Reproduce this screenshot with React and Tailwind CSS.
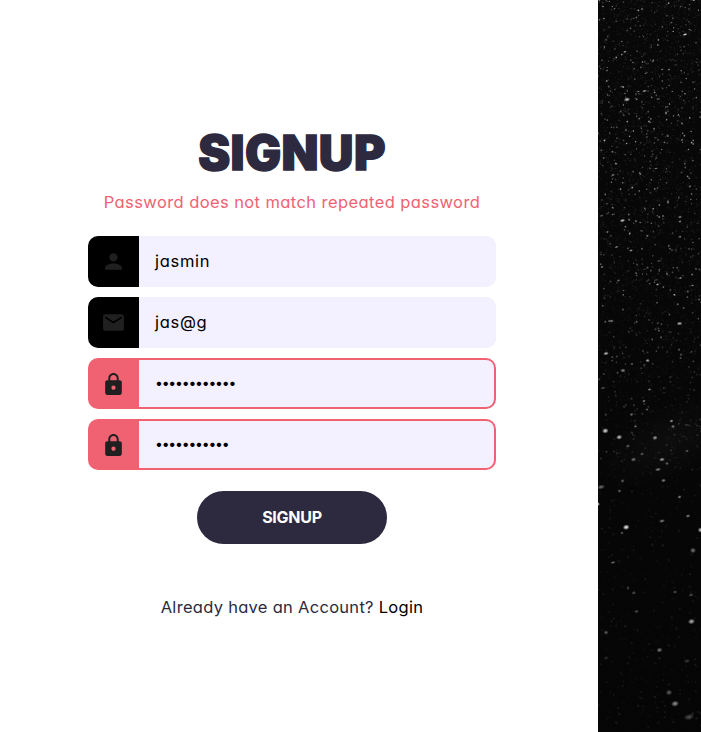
import { MdPerson, MdMail, MdLock } from "react-icons/md";

// [x, y, rx, ry, opacity] of the bright stars, in panel coordinates
const STARS = [
  [87, 34.5, 2, 1, 0.85], [29, 99.5, 2.4, 1.6, 0.8], [46.5, 91, 1.8, 1, 0.65], [40.5, 91.5, 1, 0.7, 0.6],
  [91.5, 29.5, 1, 0.8, 0.5], [44, 9, 1.2, 0.9, 0.5], [26.5, 52, 1, 0.8, 0.6], [35, 62.5, 1, 0.8, 0.5],
  [44.5, 62, 1, 0.8, 0.6], [9, 70.5, 1, 0.9, 0.5], [68, 113, 1.2, 1.4, 0.55], [24.5, 220.5, 2, 1.2, 0.85],
  [70, 202, 1.2, 1.6, 0.5], [82, 217, 1.6, 1.2, 0.5], [82, 221.5, 1.2, 1, 0.6], [15, 175, 1.5, 1, 0.5],
  [58, 168.5, 1.5, 0.8, 0.5], [84, 140, 1.3, 0.9, 0.5], [65, 216, 1, 0.8, 0.6], [9.5, 232, 1, 0.8, 0.6],
  [18.5, 247, 1.7, 0.8, 0.6], [33, 250.5, 1.5, 1, 0.6], [4, 267, 1.2, 0.9, 0.6], [59.5, 284.5, 1.2, 1, 0.75],
  [69, 274, 1, 1.4, 0.45], [82.5, 278, 1.2, 1, 0.6], [94.5, 285.5, 1.5, 0.8, 0.55], [76, 294.5, 1, 0.8, 0.5],
  [20.5, 280.5, 1.2, 1, 0.5], [25.5, 290.5, 1, 0.8, 0.4], [13.5, 321, 1.8, 1.2, 0.5], [81.5, 323.5, 2.1, 1.4, 0.7],
  [8, 353.5, 2.1, 1.3, 0.75], [49.5, 360.5, 1.6, 1.2, 0.7], [25, 370.5, 2, 1.5, 0.5], [34, 364, 1.3, 1, 0.4],
  [51.5, 389.5, 1.4, 1, 0.6], [46, 401, 1.4, 1.1, 0.5], [49, 409.5, 1.4, 1, 0.4], [33.5, 414.5, 1.5, 1.2, 0.45],
  [5, 388, 2, 0.9, 0.35], [37.5, 426.5, 1.3, 1, 0.5], [73.5, 421, 1.6, 1.2, 0.6], [75, 426.5, 1.6, 1.2, 0.5],
  [7.3, 430.8, 2.4, 2, 0.85], [21.2, 437.2, 2.3, 1.8, 0.75], [57, 437.8, 2, 1.6, 0.6], [35.5, 459.5, 2, 1.6, 0.45],
  [64, 459.5, 2.2, 1.5, 0.6], [69, 463.5, 1.4, 1.2, 0.4], [60, 469.5, 2.3, 1.3, 0.5], [65.5, 480.5, 1.8, 1.4, 0.5],
  [24.5, 481, 1.6, 1.4, 0.35], [3, 487, 3, 1.7, 0.4], [89, 451, 1.4, 1.2, 0.35], [44, 454, 1.5, 1.3, 0.35],
  [30, 446, 1.6, 1.3, 0.35], [81.5, 497, 1.6, 1.3, 0.5], [90, 516, 1.8, 1.3, 0.5], [64, 521, 2.2, 1.3, 0.5],
  [21.5, 491, 1.4, 1.3, 0.4], [0.5, 504, 1, 1.5, 0.7], [28.2, 527.2, 2.5, 2, 0.95], [24, 533, 1.4, 1.2, 0.35],
  [102.5, 530, 2, 2, 0.75], [95, 550.5, 2.2, 2, 0.45], [15, 562.5, 2, 1, 0.45], [36, 593, 1.8, 1.3, 0.25],
  [30, 588, 1.3, 1.6, 0.25], [77, 592, 1.6, 1.3, 0.3], [93, 595, 2, 1.3, 0.3], [38.5, 611.5, 1.7, 1.4, 0.3],
  [8, 632.5, 1.8, 1.6, 0.35], [93.5, 621.5, 2.6, 2, 0.7], [61.5, 650, 2.2, 1.8, 0.45], [71, 692.5, 2.4, 2.2, 0.35],
  [77, 703.7, 2.9, 2.2, 0.55], [91, 717, 4, 2.2, 0.28], [89, 661, 2.4, 1.6, 0.2], [8, 658, 2, 1.5, 0.15],
];

function makeDust() {
  let seed = 41;
  const next = () => {
    seed = (seed * 16807) % 2147483647;
    return seed / 2147483647;
  };
  const dust = [];
  for (let i = 0; i < 5200; i++) {
    const depth = Math.pow(next(), 1.15);
    const near = next();
    const fade = Math.min(1, Math.max(0.12, 1.3 - depth * 1.7));
    dust.push({
      x: next() * 103,
      y: depth * 732,
      r: 0.5 + near * 0.35 + depth * 0.5,
      o: (0.06 + Math.pow(next(), 8) * 0.6) * fade,
    });
  }
  return dust;
}

const DUST = makeDust();

function StarField() {
  return (
    <svg className="block h-[732px] w-[103px]" viewBox="0 0 103 732">
      <defs>
        <radialGradient id="haze">
          <stop offset="0" stopColor="#fff" stopOpacity="0.03" />
          <stop offset="1" stopColor="#fff" stopOpacity="0" />
        </radialGradient>
        <radialGradient id="star">
          <stop offset="0.2" stopColor="#fff" />
          <stop offset="1" stopColor="#fff" stopOpacity="0" />
        </radialGradient>
        <linearGradient id="sky" x2="0" y2="1">
          <stop offset="0" stopColor="#080808" />
          <stop offset="1" stopColor="#050505" />
        </linearGradient>
      </defs>
      <rect width="103" height="732" fill="url(#sky)" />
      <ellipse cx="70" cy="442" rx="75" ry="36" fill="url(#haze)" transform="rotate(-25 70 442)" />
      {DUST.map((d, i) => (
        <circle key={i} cx={d.x} cy={d.y} r={d.r} fill="#fff" opacity={d.o} />
      ))}
      {STARS.map(([x, y, rx, ry, o], i) => (
        <ellipse key={i} cx={x} cy={y} rx={rx * 1.4} ry={ry * 1.4} fill="url(#star)" opacity={o * 0.9} transform={`rotate(-12 ${x} ${y})`} />
      ))}
    </svg>
  );
}

function Field({ icon: Icon, error, children }) {
  return (
    <div className={`flex h-[51px] w-full overflow-hidden rounded-[10px] ${error ? "bg-[#f06272]" : "bg-[#f3f0ff]"}`}>
      <div className={`flex w-[51px] shrink-0 items-center justify-center ${error ? "pt-px" : "bg-black"}`}>
        <Icon size={25} color="#202020" />
      </div>
      <div
        className={`flex flex-1 items-center bg-[#f3f0ff] pl-4 text-black ${
          error ? "my-0.5 mr-0.5 rounded-r-[8px] pb-0.5" : ""
        }`}
      >
        {children}
      </div>
    </div>
  );
}

export default function App() {
  return (
    <main className="flex h-[732px] w-[701px] overflow-hidden bg-white font-['Inter',sans-serif] text-[16.5px] whitespace-nowrap text-[#2d2a40] [font-feature-settings:'cv11','calt'_0]">
      <section className="flex w-[598px] flex-col items-center pt-[128px] pr-[14px]">
        <h1 className="h-[50px] text-[48px] leading-[50px] font-black tracking-[0.4px] [-webkit-text-stroke:1.4px_#2d2a40]">SIGNUP</h1>
        <p className="mt-3 h-6 leading-6 tracking-[0.41px] text-[#f06272]">Password does not match repeated password</p>
        <form className="mt-[22px] flex w-[408px] flex-col items-center gap-2.5">
          <Field icon={MdPerson}>
            <span className="tracking-[0.7px]">jasmin</span>
          </Field>
          <Field icon={MdMail}>
            <span className="tracking-[0.7px]">jas@g</span>
          </Field>
          <Field icon={MdLock} error>
            <span className="text-[14px] tracking-[-1.2px]">••••••••••••</span>
          </Field>
          <Field icon={MdLock} error>
            <span className="text-[14px] tracking-[-1.2px]">•••••••••••</span>
          </Field>
          <button type="button" className="mt-[11px] h-[53px] w-[190px] rounded-full bg-[#2d2a40] pb-0.5 text-[16px] font-bold tracking-[-0.25px] text-white">
            SIGNUP
          </button>
        </form>
        <p className="mt-[51px] h-6 leading-6 tracking-[0.29px]">
          Already have an Account? <a className="text-black">Login</a>
        </p>
      </section>
      <aside className="w-[103px] shrink-0 bg-[#060606]">
        <StarField />
      </aside>
    </main>
  );
}
